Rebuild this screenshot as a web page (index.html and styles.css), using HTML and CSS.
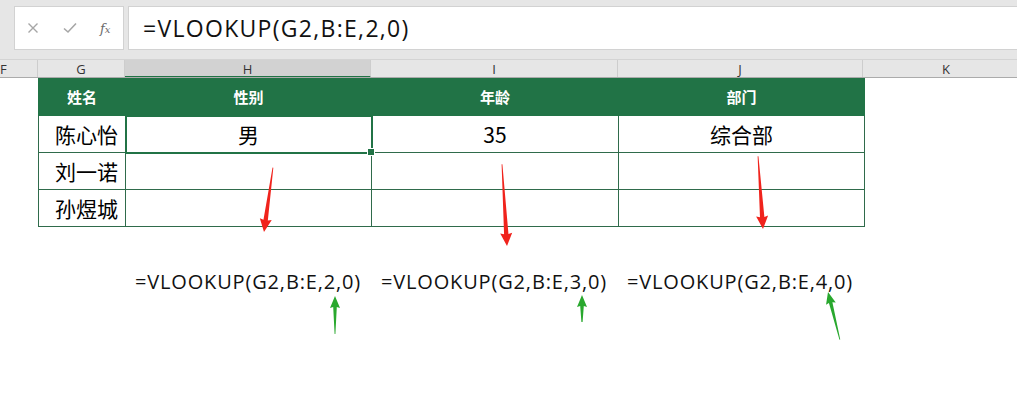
FILE: index.html
```html
<!DOCTYPE html>
<html lang="zh">
<head>
<meta charset="utf-8">
<title>VLOOKUP</title>
<link rel="stylesheet" href="styles.css">
</head>
<body>
<div class="toolbar">
  <div class="fnbox">
    <svg class="ico" width="12" height="12" viewBox="0 0 12 12"><path d="M1.5 1.5 L10.5 10.5 M10.5 1.5 L1.5 10.5" stroke="#a6a6a6" stroke-width="1.4" fill="none"/></svg>
    <svg class="ico" width="14" height="12" viewBox="0 0 14 12"><path d="M1 6.5 L5 10 L13 1.5" stroke="#a6a6a6" stroke-width="1.6" fill="none"/></svg>
    <span class="fx">f<span class="fxx">x</span></span>
  </div>
  <div class="formula">=VLOOKUP(G2,B:E,2,0)</div>
</div>
<div class="colhead">
  <div class="ch cf">F</div>
  <div class="ch cg">G</div>
  <div class="ch chh sel">H</div>
  <div class="ch ci">I</div>
  <div class="ch cj">J</div>
  <div class="ch ck">K</div>
</div>
<div class="sheet">
  <table class="data">
    <colgroup><col class="w-g"><col class="w-h"><col class="w-i"><col class="w-j"></colgroup>
    <tr class="head"><th>姓名</th><th>性别</th><th>年龄</th><th>部门</th></tr>
    <tr><td class="name">陈心怡</td><td class="active">男</td><td>35</td><td>综合部</td></tr>
    <tr><td class="name">刘一诺</td><td></td><td></td><td></td></tr>
    <tr><td class="name">孙煜城</td><td></td><td></td><td></td></tr>
  </table>
  <div class="formulas">
    <div class="fml">=VLOOKUP(G2,B:E,2,0)</div>
    <div class="fml">=VLOOKUP(G2,B:E,3,0)</div>
    <div class="fml">=VLOOKUP(G2,B:E,4,0)</div>
  </div>
  <svg class="arrows" width="1017" height="394" viewBox="0 0 1017 394">
    <g fill="#f0231c">
      <polygon transform="translate(264,233) rotate(7.9)" points="-0.4,-65 0.4,-65 2.2,-12 6,-13 0,0 -6,-13 -2.2,-12"/>
      <polygon transform="translate(507,247) rotate(-3.5)" points="-0.4,-82 0.4,-82 2.2,-12 6,-13 0,0 -6,-13 -2.2,-12"/>
      <polygon transform="translate(763,230) rotate(-3.9)" points="-0.4,-73 0.4,-73 2.2,-12 6,-13 0,0 -6,-13 -2.2,-12"/>
    </g>
    <g fill="#29a82e">
      <polygon transform="translate(335,297) rotate(180)" points="-0.4,-38 0.4,-38 1.8,-11 5,-12 0,0 -5,-12 -1.8,-11"/>
      <polygon transform="translate(582,296) rotate(180)" points="-0.6,-27 0.6,-27 1.8,-11 5,-12 0,0 -5,-12 -1.8,-11"/>
      <polygon transform="translate(828,293) rotate(166)" points="-0.4,-49 0.4,-49 1.8,-11 5,-12 0,0 -5,-12 -1.8,-11"/>
    </g>
  </svg>
</div>
</body>
</html>
```
FILE: styles.css
```css
* { box-sizing: border-box; }
html, body { margin: 0; padding: 0; }
body {
  width: 1017px;
  height: 394px;
  overflow: hidden;
  background: #ffffff;
  font-family: "Open Sans", "Noto Sans CJK SC", sans-serif;
  color: #000;
  position: relative;
}
.toolbar {
  height: 60px;
  background: #e6e6e6;
  display: flex;
  align-items: flex-start;
  padding-top: 6px;
  border-bottom: 1px solid #d4d4d4;
}
.fnbox {
  margin-left: 14px;
  width: 110px;
  height: 44px;
  background: #fff;
  border: 1px solid #d2d2d2;
  display: flex;
  align-items: center;
  padding-left: 12px;
}
.fnbox .ico:first-child { margin-right: 24px; }
.fnbox .ico:nth-child(2) { margin-right: 23px; }
.fx {
  font-family: "DejaVu Serif", "Liberation Serif", serif;
  font-style: italic;
  font-size: 13px;
  color: #6a6a6a;
  line-height: 1;
}
.fxx { font-size: 10px; }
.formula {
  flex: 1;
  margin-left: 4px;
  height: 44px;
  background: #fff;
  border-top: 1px solid #d2d2d2;
  border-bottom: 1px solid #d2d2d2;
  border-left: 1px solid #d2d2d2;
  display: flex;
  align-items: center;
  padding-left: 14px;
  font-size: 23px;
  letter-spacing: 1.3px;
  color: #111;
}
.colhead {
  display: flex;
  height: 18px;
  background: #e6e6e6;
  border-bottom: 1px solid #ababab;
  overflow: hidden;
  font-family: "Open Sans", sans-serif;
  font-size: 13px;
  color: #333;
}
.ch {
  flex: none;
  height: 17px;
  line-height: 18px;
  text-align: center;
  border-right: 1px solid #cdcdcd;
}
.cf { width: 38px; text-align: left; }
.cg { width: 87px; }
.chh { width: 246px; }
.ci { width: 247px; }
.cj { width: 245px; }
.ck { width: 166px; border-right: none; }
.ch.sel {
  background: #d2d2d2;
  color: #333;
  height: 18px;
  border-bottom: 2px solid #217346;
}
.sheet { position: relative; height: 316px; }
.data {
  border-collapse: collapse;
  margin-left: 38px;
  table-layout: fixed;
  width: 826px;
}
.w-g { width: 87px; }
.w-h { width: 246px; }
.w-i { width: 247px; }
.w-j { width: 246px; }
.data th, .data td {
  border: 1px solid #2f6b4b;
  height: 37px;
  padding: 0;
  text-align: center;
  font-family: "Noto Sans CJK SC", sans-serif;
}
.data tr.head th {
  background: #217346;
  border-color: #217346;
  color: #fff;
  font-size: 15px;
  font-weight: 700;
  border-top: none;
}
.data td {
  font-size: 21px;
  font-weight: 400;
  color: #000;
}
.data td.name { text-align: right; padding-right: 7px; }
.data td.active { position: relative; }
.data td.active::after {
  content: "";
  position: absolute;
  left: -1px; top: -1px; right: -2px; bottom: -2px;
  border: 2px solid #217346;
}
.data td.active::before {
  content: "";
  position: absolute;
  right: -4px; bottom: -4px;
  width: 6px; height: 6px;
  background: #217346;
  border: 1px solid #fff;
  z-index: 2;
}
.formulas {
  display: flex;
  margin-left: 125px;
  margin-top: 41px;
}
.fml {
  width: 246px;
  text-align: center;
  font-size: 20px;
  letter-spacing: 0.85px;
  line-height: 27px;
  color: #111;
}
.arrows {
  position: absolute;
  left: 0;
  top: -79px;
  pointer-events: none;
}
```
